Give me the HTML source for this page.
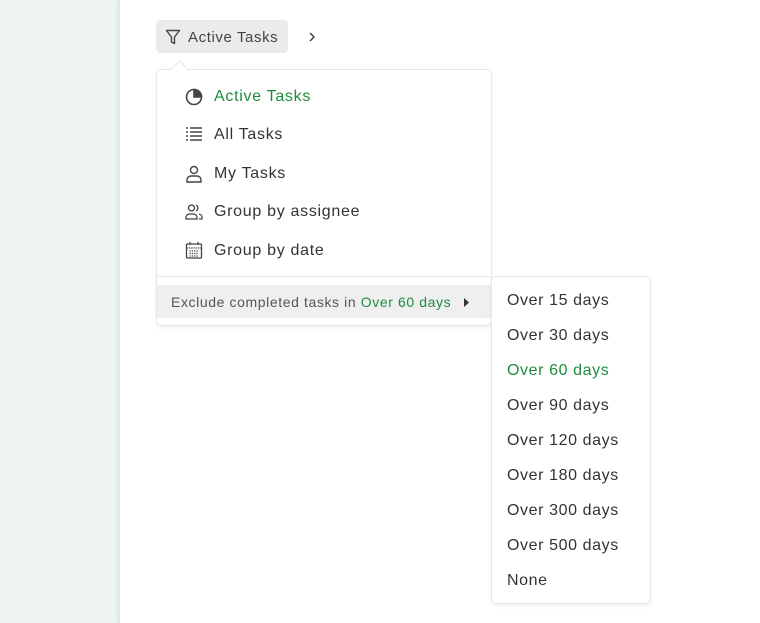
<!DOCTYPE html>
<html><head><style>
body{margin:0;width:760px;height:623px;background:#fff;font-family:"Liberation Sans",sans-serif;position:relative;overflow:hidden}
.side{position:absolute;left:0;top:0;width:120px;height:623px;background:#eef4f1;box-shadow:inset -6px 0 8px -6px rgba(0,0,0,.12)}
.btn{position:absolute;left:156px;top:20px;width:132px;height:33px;background:#ebebeb;border-radius:4px;color:#444;font-size:15px;letter-spacing:.6px}
.btn span{position:absolute;left:32px;top:9px}
.chev{position:absolute;left:306px;top:30px}
.menu{position:absolute;left:157px;top:70px;width:334px;height:255px;background:#fff;border-radius:4px;box-shadow:0 0 0 1px #e6e6e6,0 2px 6px rgba(0,0,0,.08)}
.arrow{position:absolute;left:173px;top:63px;width:12px;height:12px;background:#fff;transform:rotate(45deg);border-left:1px solid #e6e6e6;border-top:1px solid #e6e6e6}
.item{position:absolute;left:57px;font-size:16px;color:#333;letter-spacing:.7px}
.ic{position:absolute;left:28px}
.div{position:absolute;left:0;top:206px;width:334px;height:1px;background:#e6e6e6}
.ex{position:absolute;left:0;top:215px;width:334px;height:33px;background:#efefef;font-size:14px;color:#555;letter-spacing:.6px}
.ex span{position:absolute;left:14px;top:9px}
.g{color:#1e8c3e}
.sub{position:absolute;left:492px;top:277px;width:158px;height:326px;background:#fff;border-radius:4px;box-shadow:0 0 0 1px #e6e6e6,0 2px 6px rgba(0,0,0,.08)}
.sub div{position:absolute;left:15px;font-size:16px;color:#333;letter-spacing:.6px}
.sub div.g{color:#1e8c3e}
</style></head><body>
<div class="side"></div>
<div class="btn"><svg style="position:absolute;left:9px;top:9px" width="16" height="16" viewBox="0 0 16 16" fill="none" stroke="#444" stroke-width="1.4" stroke-linejoin="round"><path d="M1.5 1.5h13l-5 6.5v6.5l-3-1.5v-5z"/></svg><span>Active Tasks</span></div>
<svg class="chev" width="12" height="14" viewBox="0 0 12 14" fill="none" stroke="#444" stroke-width="1.5"><path d="M4 3l4 4-4 4"/></svg>
<div class="menu">
<svg class="ic" style="top:18px" width="18" height="18" viewBox="0 0 18 18" fill="none" stroke="#444" stroke-width="1.6"><circle cx="9" cy="9" r="7.5"/><path d="M9 1.5V9h7.5A7.5 7.5 0 0 0 9 1.5z" fill="#444"/></svg>
<div class="item g" style="top:18px">Active Tasks</div>
<svg class="ic" style="top:56px" width="18" height="16" viewBox="0 0 18 16" stroke="#444" stroke-width="1.4"><path d="M1 2h2M1 6h2M1 10h2M1 14h2M5 2h12M5 6h12M5 10h12M5 14h12"/></svg>
<div class="item" style="top:56px">All Tasks</div>
<svg class="ic" style="top:95px" width="18" height="18" viewBox="0 0 18 18" fill="none" stroke="#444" stroke-width="1.4"><circle cx="9" cy="5" r="3.5"/><path d="M2 17v-2a4 4 0 0 1 4-4h6a4 4 0 0 1 4 4v2z"/></svg>
<div class="item" style="top:95px">My Tasks</div>
<svg class="ic" style="top:133px" width="18" height="18" viewBox="0 0 18 18" fill="none" stroke="#444" stroke-width="1.3"><circle cx="6.5" cy="5" r="3"/><path d="M1 16v-1.5a3.5 3.5 0 0 1 3.5-3.5h4a3.5 3.5 0 0 1 3.5 3.5V16z"/><path d="M11 2.2a3 3 0 0 1 0 5.6M14 11a3.5 3.5 0 0 1 3 3.5V16h-3"/></svg>
<div class="item" style="top:133px">Group by assignee</div>
<svg class="ic" style="top:171px" width="18" height="18" viewBox="0 0 18 18" fill="none" stroke="#444" stroke-width="1.3"><rect x="1.5" y="3" width="15" height="14" rx="1"/><path d="M1.5 7h15M5 1v3M13 1v3M4.5 10h9M4.5 12.5h9M4.5 15h9" stroke-dasharray="1.3 1"/></svg>
<div class="item" style="top:172px">Group by date</div>
<div class="div"></div>
<div class="ex"><span>Exclude completed tasks in <span class="g" style="position:static">Over 60 days</span></span><svg style="position:absolute;left:307px;top:13px" width="6" height="9"><path d="M0 0l5 4.5L0 9z" fill="#333"/></svg></div>
</div>
<div class="arrow"></div>
<div class="sub">
<div style="top:15px">Over 15 days</div>
<div style="top:50px">Over 30 days</div>
<div style="top:85px" class="g">Over 60 days</div>
<div style="top:120px">Over 90 days</div>
<div style="top:155px">Over 120 days</div>
<div style="top:190px">Over 180 days</div>
<div style="top:225px">Over 300 days</div>
<div style="top:260px">Over 500 days</div>
<div style="top:295px">None</div>
</div>
</body></html>
